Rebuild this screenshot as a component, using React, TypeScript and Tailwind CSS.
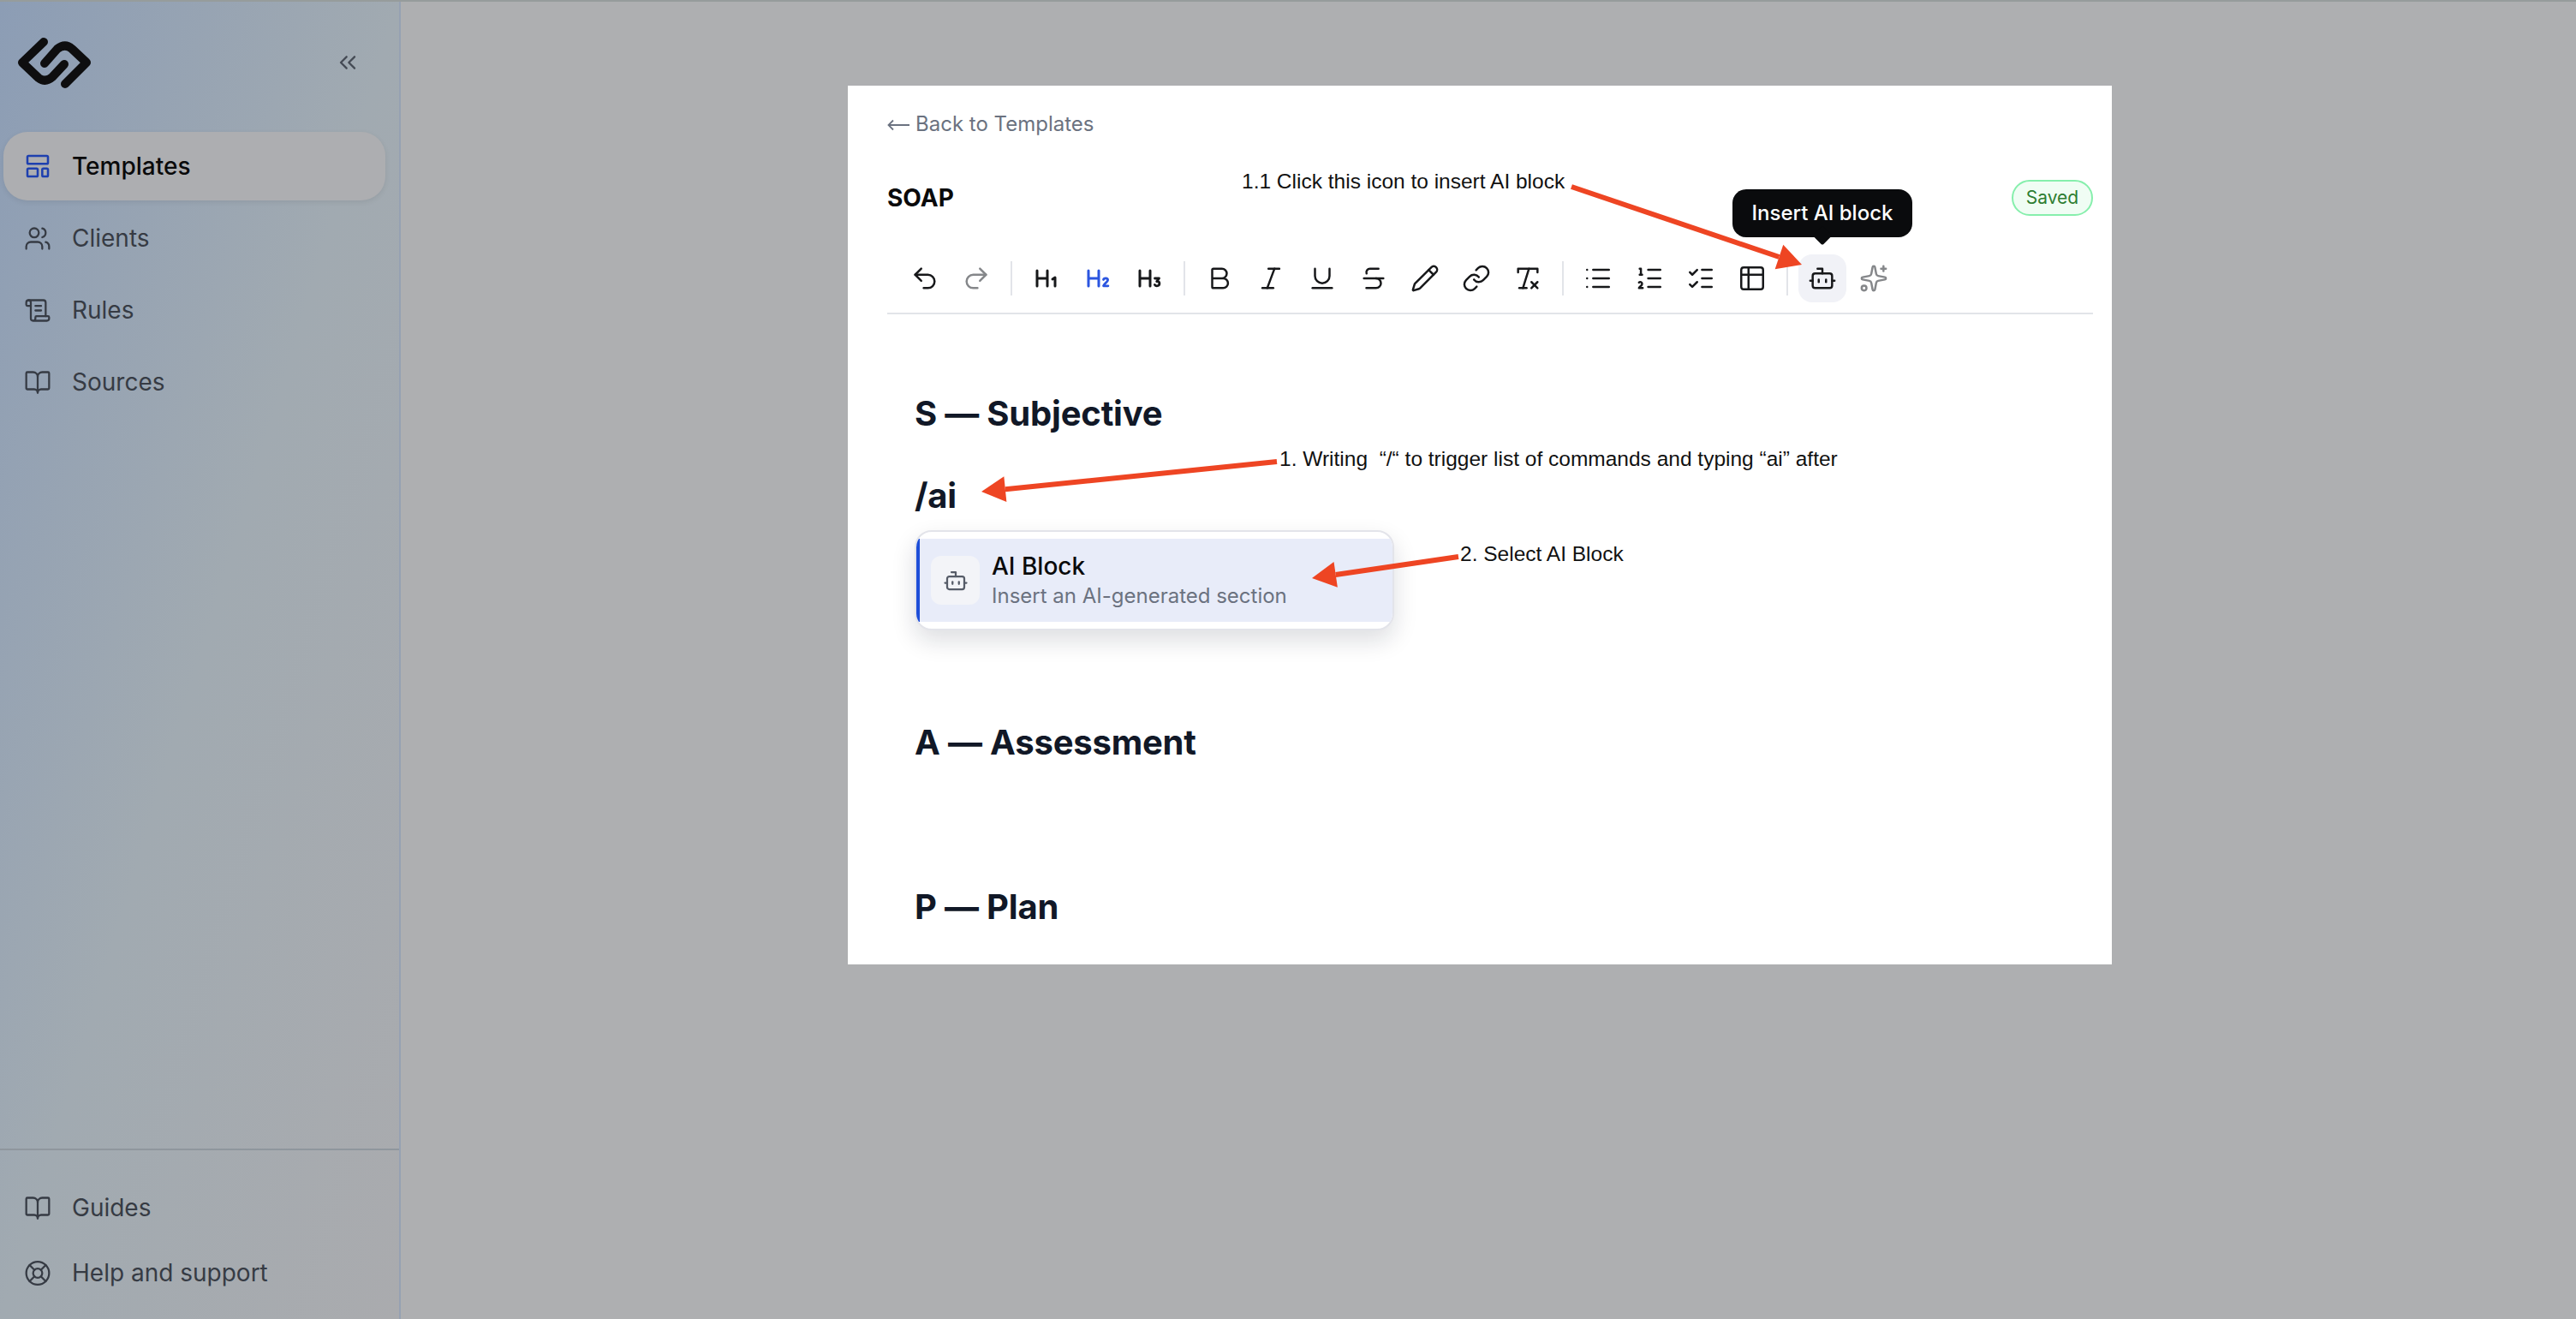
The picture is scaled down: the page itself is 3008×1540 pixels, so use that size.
import {
  Bold,
  BookOpen,
  Bot,
  ChevronsLeft,
  Italic,
  LayoutTemplate,
  LifeBuoy,
  Link,
  List,
  ListChecks,
  ListOrdered,
  Pencil,
  Redo2,
  RemoveFormatting,
  ScrollText,
  Sparkles,
  Strikethrough,
  Table2,
  Underline,
  Undo2,
  Users,
} from "lucide-react";

function Logo() {
  return (
    <svg width="90" height="64" viewBox="20 42 90 64" fill="none" stroke="#0e0e0f" strokeWidth="10" strokeLinecap="round" strokeLinejoin="round">
      <path d="M52 49 L27 73 L46 91 Q54 97 62 90 L76 75" />
      <path d="M77 98 L102 73 L85 57 Q77 50 68 57 L53 74" />
    </svg>
  );
}

function HeadingIcon({ digit, color }: { digit: 1 | 2 | 3; color: string }) {
  return (
    <svg width="28" height="24" viewBox="-1 0 28 24" fill="none" stroke={color} strokeLinecap="round" strokeLinejoin="round">
      <path d="M2 3v18M14 3v18M2 12h12" strokeWidth="3" />
      {digit === 1 && <path d="M20 13l3-2v10" strokeWidth="3" />}
      {digit === 2 && <path d="M19.500 13.500c.4-2 5.100-2.400 5.100.6 0 2-4 3.600-5.100 6.700h5.400" strokeWidth="2.800" />}
      {digit === 3 && <path d="M19.500 12h5l-2.800 3.600c2.300-.4 3.200 1 3.200 2.500 0 3-4.100 3.600-5.500 1.400" strokeWidth="2.800" />}
    </svg>
  );
}

function ToolButton({ children, active }: { children: React.ReactNode; active?: boolean }) {
  return (
    <div className={`flex h-14 w-14 items-center justify-center rounded-2xl ${active ? "bg-[#f1f2f7]" : ""}`}>
      {children}
    </div>
  );
}

function Divider() {
  return <div className="mx-2 h-10 w-[2px] bg-[#e2e4e9]" />;
}

function Arrow({ x1, y1, x2, y2 }: { x1: number; y1: number; x2: number; y2: number }) {
  const a = Math.atan2(y2 - y1, x2 - x1);
  const len = 28;
  const half = 15;
  const bx = x2 - Math.cos(a) * len;
  const by = y2 - Math.sin(a) * len;
  const p1 = `${bx - Math.sin(a) * half},${by + Math.cos(a) * half}`;
  const p2 = `${bx + Math.sin(a) * half},${by - Math.cos(a) * half}`;
  return (
    <g>
      <line x1={x1} y1={y1} x2={bx} y2={by} stroke="#ee4523" strokeWidth="6" />
      <polygon points={`${x2},${y2} ${p1} ${p2}`} fill="#ee4523" />
    </g>
  );
}

function NavItem({ icon, label, active }: { icon: React.ReactNode; label: string; active?: boolean }) {
  return (
    <div
      className={`flex h-20 items-center gap-[24px] rounded-[28px] pl-[24px] text-[28px] ${
        active ? "bg-[#adaeb1] font-medium text-[#0a0a0b] shadow-[0_2px_6px_rgba(0,0,0,0.08)]" : "text-[#363b44]"
      }`}
    >
      <div className="flex h-8 w-8 items-center justify-center">{icon}</div>
      <span>{label}</span>
    </div>
  );
}

const headingClass = "flex h-24 items-center pt-[2px] text-[40px] font-bold leading-none tracking-[-0.005em] text-[#111827]";
const noteClass = "absolute whitespace-pre font-['Liberation_Sans',sans-serif] text-[24.5px] leading-[30px] text-[#111]";

export default function App() {
  const tool = { size: 34, strokeWidth: 1.75, color: "#17181a" };

  return (
    <div className="relative flex h-[1540px] w-[3008px] overflow-hidden bg-[#aeafb1] font-['Inter',sans-serif]">
      <div className="absolute inset-x-0 top-0 h-[2px] bg-[#969c9c]" />

      {/* Sidebar */}
      <aside className="flex w-[468px] shrink-0 flex-col border-r-2 border-[#96a1b2] bg-[linear-gradient(to_bottom_right,#8c9db5,#a1aab1_50%,#aaabae)]">
        <div className="flex h-[154px] shrink-0 items-start justify-between pl-[19px] pr-[44px] pt-[42px]">
          <Logo />
          <ChevronsLeft size={32} strokeWidth={1.75} color="#454b55" className="mt-[15px]" />
        </div>
        <nav className="flex flex-1 flex-col gap-1 pl-[4px] pr-[16px]">
          <NavItem active label="Templates" icon={<LayoutTemplate size={36} strokeWidth={1.9} color="#1e40af" />} />
          <NavItem label="Clients" icon={<Users size={33} strokeWidth={1.7} color="#363b44" />} />
          <NavItem label="Rules" icon={<ScrollText size={33} strokeWidth={1.7} color="#363b44" />} />
          <NavItem label="Sources" icon={<BookOpen size={33} strokeWidth={1.7} color="#363b44" />} />
        </nav>
        <div className="flex flex-col border-t-2 border-[#8f969d] pb-[16px] pl-[4px] pr-[16px] pt-[29px]">
          <div className="flex h-[76px] items-center gap-[24px] pl-[24px] text-[28px] text-[#363b44]">
            <div className="flex h-8 w-8 items-center justify-center">
              <BookOpen size={33} strokeWidth={1.7} color="#363b44" />
            </div>
            <span>Guides</span>
          </div>
          <div className="flex h-[76px] items-center gap-[24px] pl-[24px] text-[28px] text-[#363b44]">
            <div className="flex h-8 w-8 items-center justify-center">
              <LifeBuoy size={33} strokeWidth={1.7} color="#363b44" />
            </div>
            <span>Help and support</span>
          </div>
        </div>
      </aside>

      {/* Main */}
      <main className="flex-1 pl-[522px] pt-[100px]">
        <div className="relative h-[1026px] w-[1476px] overflow-hidden bg-white pl-[46px] pr-[22px] pt-[30px]">
          <div className="flex h-[30px] items-center gap-[7px] text-[24px] text-[#6b7280]">
            <svg width="26" height="14" viewBox="0 0 26 14" fill="none" stroke="#6b7280" strokeWidth="1.800" className="mt-[2px]">
              <path d="M1 7h25M7 1.500 1.500 7 7 12.500" />
            </svg>
            <span>Back to Templates</span>
          </div>

          <div className="mt-[50px] flex h-[42px] items-center justify-between">
            <span className="text-[28px] font-bold text-[#0a0a0b]">SOAP</span>
            <span className="flex h-[42px] w-[95px] items-center justify-center rounded-full border-2 border-[#86efac] bg-[#f0fdf4] text-[21px] text-[#2e7d32]">
              Saved
            </span>
          </div>

          <div className="mt-[45px] flex h-[70px] items-start gap-1 border-b-2 border-[#e2e4e9] pl-4">
            <ToolButton><Undo2 {...tool} /></ToolButton>
            <ToolButton><Redo2 {...tool} color="#85878a" /></ToolButton>
            <div className="flex h-14 items-center"><Divider /></div>
            <ToolButton><HeadingIcon digit={1} color="#17181a" /></ToolButton>
            <ToolButton><HeadingIcon digit={2} color="#2b55e0" /></ToolButton>
            <ToolButton><HeadingIcon digit={3} color="#17181a" /></ToolButton>
            <div className="flex h-14 items-center"><Divider /></div>
            <ToolButton><Bold {...tool} /></ToolButton>
            <ToolButton><Italic {...tool} /></ToolButton>
            <ToolButton><Underline {...tool} /></ToolButton>
            <ToolButton><Strikethrough {...tool} /></ToolButton>
            <ToolButton><Pencil {...tool} /></ToolButton>
            <ToolButton><Link {...tool} /></ToolButton>
            <ToolButton><RemoveFormatting {...tool} /></ToolButton>
            <div className="flex h-14 items-center"><Divider /></div>
            <ToolButton><List {...tool} /></ToolButton>
            <ToolButton><ListOrdered {...tool} /></ToolButton>
            <ToolButton><ListChecks {...tool} /></ToolButton>
            <ToolButton><Table2 {...tool} /></ToolButton>
            <div className="flex h-14 items-center"><Divider /></div>
            <div className="relative">
              <ToolButton active><Bot {...tool} /></ToolButton>
              <div className="absolute left-1/2 top-[-76px] flex h-[56px] w-[210px] -translate-x-1/2 items-center justify-center rounded-2xl bg-[#0a0b0d] text-[24px] font-medium text-white">
                Insert AI block
                <div className="absolute bottom-[-6px] left-1/2 h-4 w-4 -translate-x-1/2 rotate-45 rounded-[2px] bg-[#0a0b0d]" />
              </div>
            </div>
            <ToolButton><Sparkles {...tool} color="#85878a" /></ToolButton>
          </div>

          {/* Editor */}
          <div className="mt-[67px] pl-[32px]">
            <div className={headingClass}>S — Subjective</div>
            <div className={headingClass}>/ai</div>
            <div className="h-24" />
            <div className="h-24" />
            <div className={headingClass}>A — Assessment</div>
            <div className="h-24" />
            <div className={headingClass}>P — Plan</div>
          </div>

          {/* Slash menu */}
          <div className="absolute left-[78px] top-[519px] flex h-[117px] w-[560px] items-center overflow-hidden rounded-[20px] border-2 border-[#e3e4ea] bg-white shadow-[0_12px_28px_rgba(17,24,39,0.14)]">
            <div className="flex h-[97px] w-full items-center gap-[14px] border-l-4 border-[#1d4ed8] bg-[#e8ecf9] pl-[13px]">
              <div className="flex h-[57px] w-[57px] items-center justify-center rounded-xl bg-[#f3f4f8]">
                <Bot size={30} strokeWidth={1.8} color="#565c68" />
              </div>
              <div className="flex flex-col">
                <span className="text-[28px] font-medium leading-[36px] text-[#0a0a0b]">AI Block</span>
                <span className="text-[24px] leading-[34px] text-[#6b7280]">Insert an AI-generated section</span>
              </div>
            </div>
          </div>
        </div>
      </main>

      {/* Annotations drawn on top of the screenshot */}
      <svg className="absolute inset-0" width="3008" height="1540" viewBox="0 0 3008 1540" fill="none">
        <Arrow x1={1835} y1={218} x2={2104} y2={309} />
        <Arrow x1={1491} y1={539} x2={1146} y2={574} />
        <Arrow x1={1703} y1={650} x2={1532} y2={675} />
      </svg>
      <div className={`${noteClass} left-[1450px] top-[197px]`}>1.1 Click this icon to insert AI block</div>
      <div className={`${noteClass} left-[1494px] top-[521px]`}>1. Writing  “/“ to trigger list of commands and typing “ai” after</div>
      <div className={`${noteClass} left-[1705px] top-[632px]`}>2. Select AI Block</div>
    </div>
  );
}
